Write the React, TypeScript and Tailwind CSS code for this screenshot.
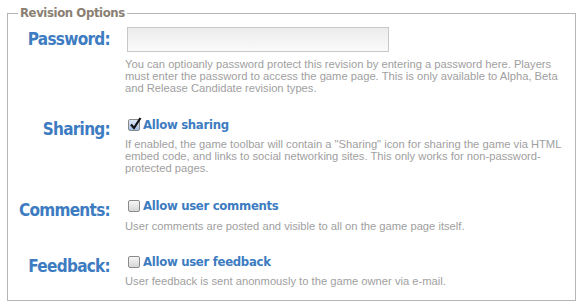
import React from "react";

function Row({ label, children, top }: { label: string; children: React.ReactNode; top: string }) {
  return (
    <div className={`flex ${top}`}>
      <div className="w-[102px] shrink-0 pt-[2px] text-right text-[17px] font-bold leading-[20px] text-[#3d7cc1] [font-family:'DejaVu_Sans_Condensed','DejaVu_Sans',sans-serif] tracking-[-0.7px]">
        {label}
      </div>
      <div className="ml-[15px] flex-1">{children}</div>
    </div>
  );
}

function Box({ checked }: { checked: boolean }) {
  return (
    <span
      className={`relative ml-[3px] mr-[3px] inline-block h-[12px] w-[12px] rounded-[2px] border border-[#8a8a8a] bg-gradient-to-b ${
        checked ? "from-[#dfe9f7] to-[#9fbde6]" : "from-[#f6f6f6] to-[#d6d6d6]"
      }`}
    >
      {checked && (
        <svg className="absolute left-[0px] top-[-4px]" width="13" height="15" viewBox="0 0 13 15">
          <path d="M2 8.5 L5 12 L11.5 2" fill="none" stroke="#111" strokeWidth="2.2" />
        </svg>
      )}
    </span>
  );
}

const desc = "whitespace-nowrap text-[11.2px] leading-[12px] text-[#a0a0a0] [font-family:'Liberation_Sans',Arial,sans-serif]";
const opt = "flex items-center text-[13px] font-bold leading-[16px] text-[#3d7cc1] tracking-[-0.3px] [font-family:'DejaVu_Sans_Condensed','DejaVu_Sans',sans-serif]";

export default function App() {
  return (
    <div className="h-[306px] w-[583px] bg-white pl-[7px] pt-[4px]">
      <fieldset className="m-0 h-[297px] w-[569px] border border-[#b5b5b5] px-[0px] pb-0 pt-0">
        <legend className="ml-[10px] px-[2px] text-[13px] font-bold tracking-[-0.4px] text-[#8a7f72] [font-family:'DejaVu_Sans_Condensed','DejaVu_Sans',sans-serif] leading-[18px]">
          Revision Options
        </legend>
        <Row label="Password:" top="mt-[5px]">
          <div className="ml-[2px] h-[25px] w-[262px] border border-[#c8c8c8] bg-gradient-to-b from-[#ececec] to-[#fafafa]" />
          <p className={`${desc} mt-[6px]`}>
            You can optioanly password protect this revision by entering a password here. Players
            <br />
            must enter the password to access the game page. This is only available to Alpha, Beta
            <br />
            and Release Candidate revision types.
          </p>
        </Row>
        <Row label="Sharing:" top="mt-[23px]">
          <div className={opt}><Box checked />Allow sharing</div>
          <p className={`${desc} mt-[5px]`}>
            If enabled, the game toolbar will contain a "Sharing" icon for sharing the game via HTML
            <br />
            embed code, and links to social networking sites. This only works for non-password-
            <br />
            protected pages.
          </p>
        </Row>
        <Row label="Comments:" top="mt-[24px]">
          <div className={opt}><Box checked={false} />Allow user comments</div>
          <p className={`${desc} mt-[6px]`}>User comments are posted and visible to all on the game page itself.</p>
        </Row>
        <Row label="Feedback:" top="mt-[22px]">
          <div className={opt}><Box checked={false} />Allow user feedback</div>
          <p className={`${desc} mt-[5px]`}>User feedback is sent anonmously to the game owner via e-mail.</p>
        </Row>
      </fieldset>
    </div>
  );
}
